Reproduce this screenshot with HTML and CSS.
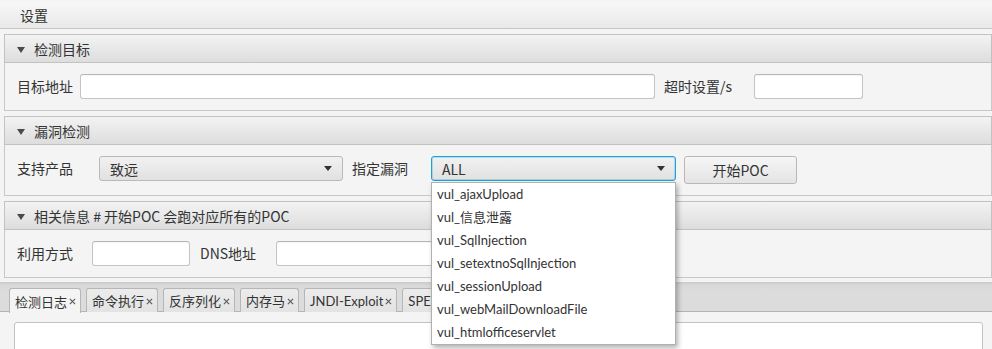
FILE: index.html
```html
<!DOCTYPE html>
<html lang="zh-CN">
<head>
<meta charset="utf-8">
<title>设置</title>
<link rel="stylesheet" href="styles.css">
</head>
<body>
<div class="menubar"><span class="menu">设置</span></div>

<div class="panes">
  <section class="tp">
    <div class="tp-head"><span class="arrow"></span>检测目标</div>
    <div class="tp-body">
      <span class="lbl w63">目标地址</span>
      <div class="tf w575"></div>
      <span class="lbl w90 ml9">超时设置/s</span>
      <div class="tf w109"></div>
    </div>
  </section>

  <section class="tp">
    <div class="tp-head"><span class="arrow"></span>漏洞检测</div>
    <div class="tp-body">
      <span class="lbl w82">支持产品</span>
      <div class="combo w244"><span>致远</span><span class="carrow"></span></div>
      <span class="lbl w79 ml9">指定漏洞</span>
      <div class="combo focused w245"><span>ALL</span><span class="carrow"></span></div>
      <button class="btn" type="button">开始POC</button>
    </div>
  </section>

  <section class="tp">
    <div class="tp-head"><span class="arrow"></span>相关信息 # 开始POC 会跑对应所有的POC</div>
    <div class="tp-body">
      <span class="lbl w75">利用方式</span>
      <div class="tf w98"></div>
      <span class="lbl w76 ml10">DNS地址</span>
      <div class="tf w200"></div>
    </div>
  </section>
</div>

<div class="tabpane">
  <div class="tab-head">
    <div class="tab sel">检测日志<svg class="x" viewBox="0 0 8 8"><path d="M1 1L7 7M7 1L1 7"/></svg></div>
    <div class="tab">命令执行<svg class="x" viewBox="0 0 8 8"><path d="M1 1L7 7M7 1L1 7"/></svg></div>
    <div class="tab">反序列化<svg class="x" viewBox="0 0 8 8"><path d="M1 1L7 7M7 1L1 7"/></svg></div>
    <div class="tab">内存马<svg class="x" viewBox="0 0 8 8"><path d="M1 1L7 7M7 1L1 7"/></svg></div>
    <div class="tab">JNDI-Exploit<svg class="x" viewBox="0 0 8 8"><path d="M1 1L7 7M7 1L1 7"/></svg></div>
    <div class="tab">SPEL</div>
  </div>
  <div class="tab-body"><div class="textarea"></div></div>
</div>

<ul class="popup">
  <li>vul_ajaxUpload</li>
  <li>vul_信息泄露</li>
  <li>vul_SqlInjection</li>
  <li>vul_setextnoSqlInjection</li>
  <li>vul_sessionUpload</li>
  <li>vul_webMailDownloadFile</li>
  <li>vul_htmlofficeservlet</li>
</ul>
</body>
</html>
```

FILE: styles.css
```css
* { box-sizing: border-box; }
html, body { margin: 0; padding: 0; }
body {
  background: #f4f4f4;
  font-family: "Noto Sans CJK SC", "Noto Sans", sans-serif;
  font-size: 14px;
  color: #333;
  width: 992px;
  height: 349px;
  overflow: hidden;
  position: relative;
}

.menubar {
  margin-top: 2px;
  height: 27px;
  border-bottom: 1px solid #c6c6c6;
  background: linear-gradient(#f7f7f7, #e9e9e9);
  display: flex;
  align-items: center;
}
.menu { padding-left: 20px; line-height: 1; }

.panes {
  margin: 5px 0 0 4px;
  width: 988px;
  display: flex;
  flex-direction: column;
  gap: 5px;
}

.tp-head {
  height: 29px;
  border: 1px solid #c2c2c2;
  background: linear-gradient(#f3f3f3, #dddddd);
  display: flex;
  align-items: center;
  padding-left: 12px;
  color: #333;
}
.arrow {
  width: 0; height: 0;
  border-left: 4px solid transparent;
  border-right: 4px solid transparent;
  border-top: 6px solid #4a4a4a;
  margin-right: 9px;
  margin-top: 2px;
}

.tp-body {
  border: 1px solid #c8c8c8;
  border-top: none;
  background: #f4f4f4;
  padding: 11px 12px 11px 12px;
  display: flex;
  align-items: flex-start;
}
.tp-body .lbl {
  height: 25px;
  line-height: 25px;
  white-space: nowrap;
}

.w63 { width: 63px; }
.w75 { width: 75px; }
.w76 { width: 76px; }
.w79 { width: 79px; }
.w82 { width: 82px; }
.w90 { width: 90px; }
.w98 { width: 98px; }
.w109 { width: 109px; }
.w200 { width: 200px; }
.w244 { width: 244px; }
.w245 { width: 245px; }
.w575 { width: 575px; }
.ml9 { margin-left: 9px; }
.ml10 { margin-left: 10px; }

.tf {
  height: 25px;
  background: #fff;
  border: 1px solid #c4c4c4;
  border-top-color: #b6b6b6;
  border-radius: 3px;
  box-shadow: inset 0 1px 1px rgba(0,0,0,0.04);
  flex: none;
}

.combo {
  height: 25px;
  flex: none;
  border: 1px solid #b9b9b9;
  border-radius: 3px;
  background: linear-gradient(#f1f1f1, #e1e1e1);
  display: flex;
  align-items: center;
  justify-content: space-between;
  padding: 0 10px 0 10px;
}
.combo.focused {
  border-color: #1fa1d6;
  box-shadow: inset 0 0 0 1px rgba(3,158,211,0.25);
}
.carrow {
  width: 0; height: 0;
  border-left: 4px solid transparent;
  border-right: 4px solid transparent;
  border-top: 5px solid #333;
}

.btn {
  margin-left: 8px;
  width: 113px;
  height: 28px;
  border: 1px solid #b8b8b8;
  border-radius: 3px;
  background: linear-gradient(#f6f6f6, #e4e4e4);
  font: inherit;
  color: #333;
  padding: 0;
}

.tabpane { margin-top: 4px; }
.tab-head {
  height: 30px;
  background: linear-gradient(#c9c9c9 0, #d8d8d8 3px, #dcdcdc 8px, #dcdcdc);
  border-bottom: 1px solid #b4b4b4;
  padding: 6px 0 0 9px;
  display: flex;
  gap: 5px;
  align-items: flex-start;
  font-family: Lato, "Noto Sans CJK SC", sans-serif;
  font-size: 13px;
}
.tab {
  height: 24px;
  border: 1px solid #b6b6b6;
  border-bottom: none;
  border-radius: 3px 3px 0 0;
  background: linear-gradient(#ececec, #e3e3e3);
  padding: 0 4px 0 5px;
  display: flex;
  align-items: center;
  white-space: nowrap;
  color: #333;
}
.tab.sel {
  background: #f4f4f4;
  height: 25px;
  position: relative;
  z-index: 1;
}
.x {
  width: 7px;
  height: 7px;
  margin-left: 2px;
  margin-top: 1px;
  fill: none;
  stroke: #555;
  stroke-width: 1.2;
}

.tab-body {
  padding: 10px 9px 0 14px;
  background: #f4f4f4;
}
.textarea {
  height: 40px;
  background: #fff;
  border: 1px solid #c2c2c2;
  border-radius: 3px;
}

.popup {
  position: absolute;
  left: 431px;
  top: 182px;
  width: 245px;
  height: 163px;
  margin: 0;
  padding: 0;
  list-style: none;
  background: #fff;
  border: 1px solid #b0b0b0;
  box-shadow: 2px 3px 5px rgba(0,0,0,0.3);
  z-index: 5;
  font-family: Lato, "Noto Sans CJK SC", sans-serif;
  font-size: 13px;
}
.popup li {
  height: 23px;
  line-height: 23px;
  padding-left: 5px;
  color: #333;
  white-space: nowrap;
}
```
